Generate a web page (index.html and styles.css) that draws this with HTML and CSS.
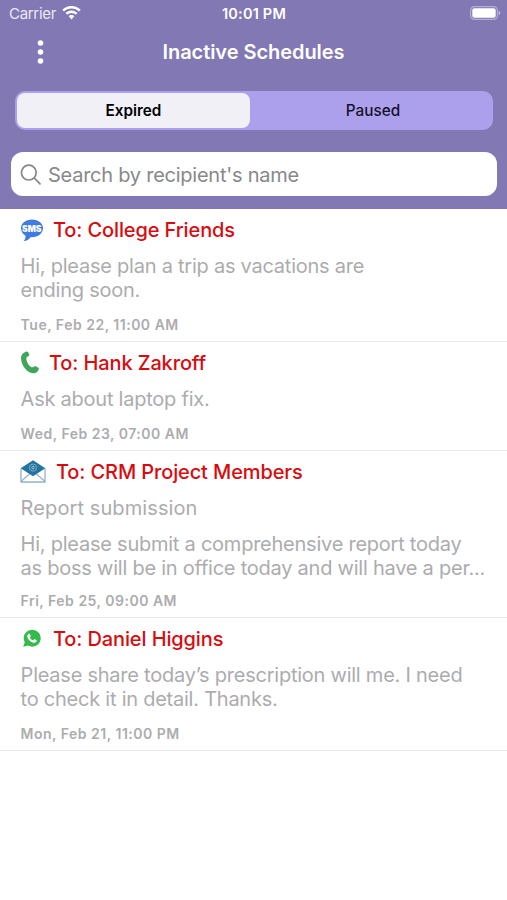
FILE: index.html
```html
<!DOCTYPE html>
<html lang="en">
<head>
  <meta charset="UTF-8">
  <meta name="viewport" content="width=device-width, initial-scale=1.0">
  <title>Inactive Schedules</title>
  <link rel="stylesheet" href="styles.css">
</head>
<body>
  <header class="header">
    <div class="status-bar">
      <div class="carrier">
        <span>Carrier</span>
        <svg width="19" height="14" viewBox="0 0 19 14" fill="#fff">
          <path d="M9.5 0C5.900 0 2.600 1.400.3 3.800L2 5.600C3.900 3.600 6.600 2.400 9.500 2.400S15.100 3.600 17 5.600L18.700 3.800C16.400 1.400 13.100 0 9.500 0Z"/>
          <path d="M9.500 4.500C7.200 4.500 5.100 5.400 3.600 7L5.300 8.800C6.400 7.700 7.900 7 9.500 7S12.600 7.700 13.700 8.800L15.400 7C13.900 5.400 11.800 4.500 9.500 4.500Z"/>
          <path d="M9.500 9C8.400 9 7.400 9.500 6.700 10.200L9.500 13.400L12.300 10.200C11.600 9.500 10.600 9 9.500 9Z"/>
        </svg>
      </div>
      <span class="time">10:01 PM</span>
      <svg class="battery" width="31" height="14" viewBox="0 0 31 14">
        <rect x=".6" y=".6" width="26.800" height="12.800" rx="3.800" fill="none" stroke="#fff" stroke-opacity=".4" stroke-width="1.200"/>
        <rect x="2.300" y="2.300" width="23.400" height="9.400" rx="2" fill="#fff"/>
        <path d="M28.700 4.800C30.800 5.600 30.800 8.400 28.700 9.200Z" fill="#fff" fill-opacity=".5"/>
      </svg>
    </div>

    <div class="nav-bar">
      <svg class="menu" width="7" height="24" viewBox="0 0 7 24" fill="#fff">
        <circle cx="3.500" cy="3" r="2.800"/>
        <circle cx="3.500" cy="12" r="2.800"/>
        <circle cx="3.500" cy="21" r="2.800"/>
      </svg>
      <h1>Inactive Schedules</h1>
    </div>

    <div class="segments">
      <button class="segment active">Expired</button>
      <button class="segment">Paused</button>
    </div>

    <div class="search">
      <svg width="22" height="22" viewBox="0 0 22 22" fill="none" stroke="#85858a" stroke-width="1.700" stroke-linecap="round">
        <circle cx="8.800" cy="8.600" r="7.400"/>
        <path d="M14.200 14L20 19.800"/>
      </svg>
      <span>Search by recipient's name</span>
    </div>
  </header>

  <main class="list">
    <div class="item">
      <div class="item-title">
        <svg width="23" height="23" viewBox="0 0 23 23">
          <path d="M12 .5C5.800 .5 1 4.300 1 9.300C1 12.600 2.800 15.200 5.500 16.800C5.600 18.800 5 20.700 3.700 22.300C6.800 21.800 9 20.300 10.500 18.200C17.500 18.700 23 14.700 23 9.300C23 4.300 18.200 .5 12 .5Z" fill="#3f7be0"/>
          <text x="11.800" y="12.500" text-anchor="middle" class="sms-text">SMS</text>
        </svg>
        <h2>To: College Friends</h2>
      </div>
      <p class="message">Hi, please plan a trip as vacations are<br>ending soon.</p>
      <p class="date">Tue, Feb 22, 11:00 AM</p>
    </div>

    <div class="item">
      <div class="item-title">
        <svg width="19" height="23" viewBox="0 0 19 23">
          <path d="M4.800 1.200C6 .3 7.300 .2 8 1L9.300 3.400C9.500 4.500 8.800 5 6.600 6.200C5.600 9.700 8.200 14.900 12.300 16.600C14 15.600 15.200 14.900 16 15.300L18.700 17C19.100 18 18.400 19.600 17.200 20.700C15.400 22.300 12.600 22.700 10 21.600C4.800 19.200 .9 12.500 1 6.600C1.200 4.200 2.500 2.200 4.800 1.200Z" fill="#3fa65b"/>
        </svg>
        <h2>To: Hank Zakroff</h2>
      </div>
      <p class="message">Ask about laptop fix.</p>
      <p class="date">Wed, Feb 23, 07:00 AM</p>
    </div>

    <div class="item mail">
      <div class="item-title">
        <svg width="26" height="23" viewBox="0 0 26 23">
          <path d="M1 8.500V22H25V8.500" fill="#fff" stroke="#8fb2cb" stroke-width="1.300"/>
          <path d="M1 21.500L10 13.500M25 21.500L16 13.500" stroke="#8fb2cb" stroke-width="1.200"/>
          <path d="M.7 8.300L13 .3L25.300 8.300L13 16.300Z" fill="#24739f"/>
          <circle cx="13" cy="7.600" r="3.600" fill="none" stroke="#7fb3d0" stroke-width=".9"/>
          <circle cx="13" cy="7.600" r="1.300" fill="none" stroke="#a4cbe0" stroke-width=".9"/>
        </svg>
        <h2>To: CRM Project Members</h2>
      </div>
      <p class="subject">Report submission</p>
      <p class="message">Hi, please submit a comprehensive report today<br>as boss will be in office today and will have a per...</p>
      <p class="date">Fri, Feb 25, 09:00 AM</p>
    </div>

    <div class="item">
      <div class="item-title">
        <svg width="23" height="19" viewBox="0 0 23 19">
          <path d="M12.200 .8C7.400 .8 3.700 4.500 3.700 9.200C3.700 10.700 4.100 12.100 4.800 13.300L3.200 17.700L8 16.600C9.300 17.300 10.700 17.700 12.200 17.700C17 17.700 20.700 13.900 20.700 9.200S17 .8 12.200 .8Z" fill="#35bb4b"/>
          <path d="M8.600 4.800L9.800 4.800L10.800 7.200L9.800 8.500C10.600 9.900 11.700 10.800 13.100 11.400L14.300 10.100L16.700 11.300C16.700 12.900 15.500 13.900 14 13.800C10.700 13.400 7.400 10.100 7.300 7.200C7.300 6.100 7.900 5.200 8.600 4.800Z" fill="#fff"/>
        </svg>
        <h2>To: Daniel Higgins</h2>
      </div>
      <p class="message">Please share today’s prescription will me. I need<br>to check it in detail. Thanks.</p>
      <p class="date">Mon, Feb 21, 11:00 PM</p>
    </div>
  </main>
</body>
</html>
```
FILE: styles.css
```css
* {
  box-sizing: border-box;
}

body {
  margin: 0;
  background-color: #fff;
  font-family: Inter, "Liberation Sans", sans-serif;
}

h1, h2, p {
  margin: 0;
}

.header {
  height: 209px;
  background-color: #8278b3;
  color: #fff;
}

.status-bar {
  display: grid;
  grid-template-columns: 1fr auto 1fr;
  align-items: center;
  height: 28px;
  padding: 0 6px 2px 9px;
  font-size: 15px;
}

.carrier {
  display: flex;
  align-items: center;
  gap: 6px;
  color: #ece9f7;
  letter-spacing: -0.3px;
}

.time {
  margin-left: -2px;
  font-size: 14.5px;
  font-weight: 600;
  letter-spacing: 0.2px;
}

.battery {
  justify-self: end;
}

.nav-bar {
  display: grid;
  grid-template-columns: 40px 1fr 40px;
  align-items: center;
  height: 48px;
  padding: 0 37px;
}

.nav-bar h1 {
  font-size: 20px;
  font-weight: 600;
  letter-spacing: -0.05px;
  text-align: center;
  white-space: nowrap;
}

.segments {
  display: flex;
  height: 39px;
  margin: 15px 14px 0 15px;
  padding: 2px;
  border-radius: 10px;
  background-color: #aca0ed;
}

.segment {
  flex: 1;
  padding: 0 0 0 5px;
  border: none;
  border-radius: 8px;
  background: none;
  color: #16122b;
  font-family: inherit;
  font-size: 15.3px;
  font-weight: 500;
}

.segment.active {
  flex: 0 0 233px;
  padding: 0;
  background-color: #f1f0f6;
  color: #000;
  font-weight: 600;
}

.search {
  display: flex;
  align-items: center;
  gap: 6px;
  height: 44px;
  margin: 22px 10px 0 11px;
  padding: 1px 9px 0;
  border-radius: 12px;
  background-color: #fff;
  color: #88888b;
  font-size: 20px;
  letter-spacing: -0.25px;
}

.item {
  padding: 9px 0 8px 20.6px;
  border-bottom: 1px solid #e9e9eb;
  color: #acacae;
}

.item-title {
  display: flex;
  align-items: center;
  gap: 10px;
  height: 24px;
  margin-bottom: 12px;
}

.item-title svg {
  margin-left: -0.6px;
}

.item-title h2 {
  color: #d80c0f;
  font-size: 20px;
  font-weight: 500;
  letter-spacing: -0.12px;
  line-height: 24px;
}

.sms-text {
  fill: #fff;
  font-size: 8.5px;
  font-weight: 900;
}

.subject {
  margin-bottom: 12.6px;
  font-size: 20px;
  letter-spacing: 0.1px;
  line-height: 24px;
}

.message {
  font-size: 20px;
  font-weight: 400;
  letter-spacing: -0.24px;
  line-height: 24.2px;
  white-space: nowrap;
}

.date {
  margin-top: 14.5px;
  font-size: 14px;
  font-weight: 600;
  letter-spacing: 0.5px;
  line-height: 16px;
}

.mail .date {
  margin-top: 12px;
}
```
